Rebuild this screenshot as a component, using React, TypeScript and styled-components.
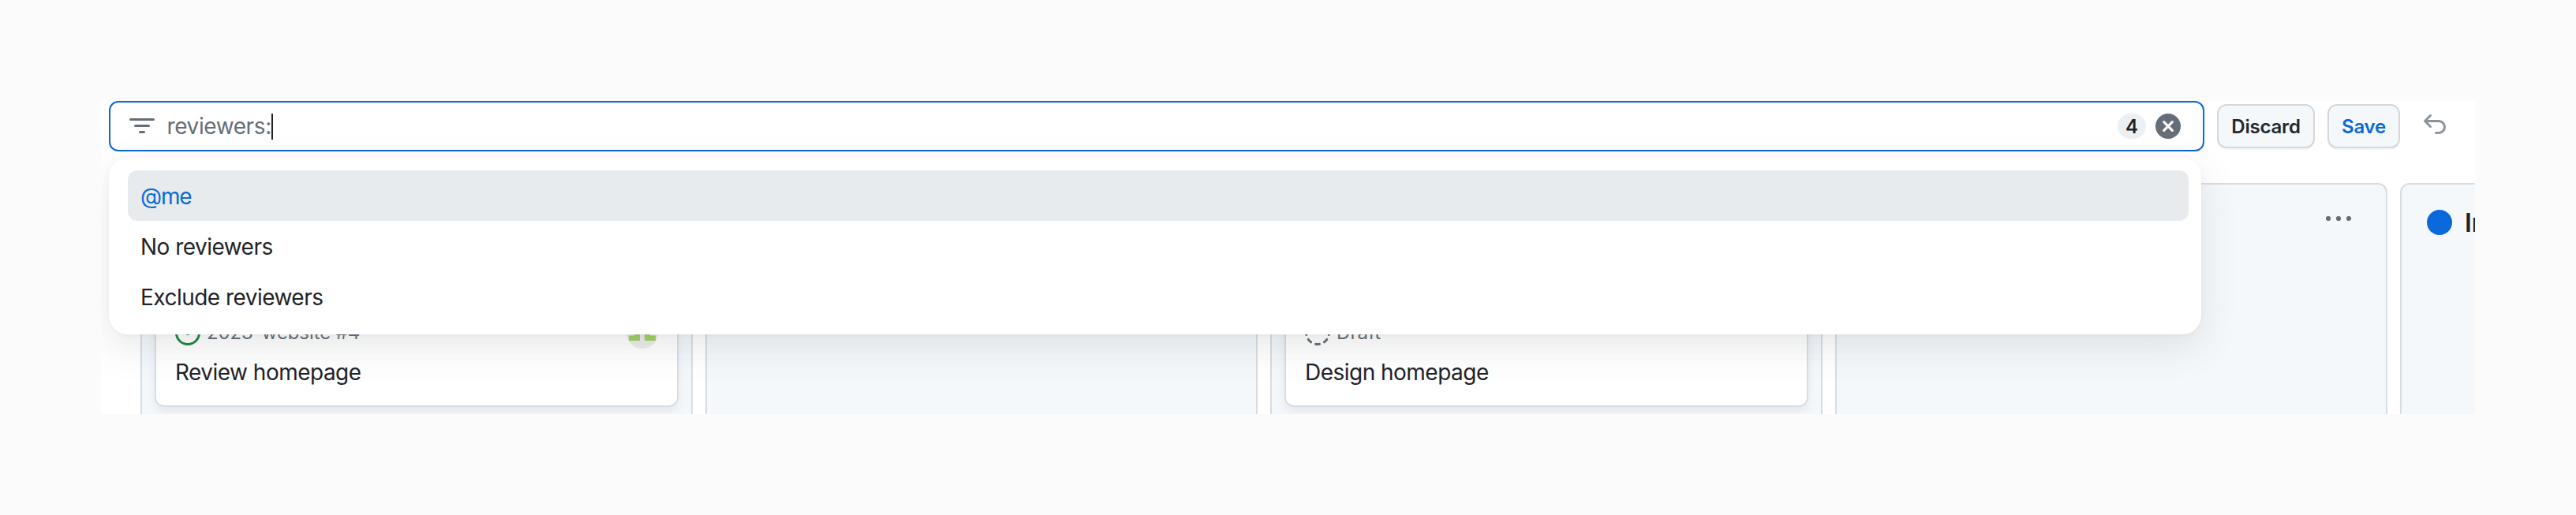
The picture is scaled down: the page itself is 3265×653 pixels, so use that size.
import React from "react";
import styled, { createGlobalStyle } from "styled-components";

const GlobalStyle = createGlobalStyle`
  *, *::before, *::after { box-sizing: border-box; }
  body {
    margin: 0;
    background: #fbfbfb;
    color: #1f2328;
    font-family: Inter, "Liberation Sans", sans-serif;
  }
`;

const Page = styled.div`
  height: 653px;
  padding: 128px 128px 128px;
  overflow: hidden;
`;

const ProjectView = styled.main`
  position: relative;
  height: 397px;
  overflow: hidden;
  background: #fff;
  display: flex;
  flex-direction: column;
`;

const Toolbar = styled.div`
  display: flex;
  align-items: center;
  gap: 16px;
  flex: none;
  height: 64px;
  padding-left: 10px;
`;

const FilterInput = styled.div`
  display: flex;
  align-items: center;
  width: 2656px;
  height: 64px;
  padding: 0 28px 0 24px;
  border: 2px solid #0969da;
  border-radius: 12px;
  background: #fff;
`;

const FilterText = styled.span`
  margin-left: 15.5px;
  color: #656d76;
  font-size: 28px;
  line-height: 40px;
  letter-spacing: -0.4px;
`;

const Caret = styled.span`
  width: 2px;
  height: 33px;
  background: #1f2328;
`;

const Counter = styled.span`
  display: flex;
  align-items: center;
  justify-content: center;
  width: 36px;
  height: 32px;
  margin: 0 12px 0 auto;
  border-radius: 16px;
  background: #ecf0f2;
  font-size: 24px;
  font-weight: 600;
`;

const Button = styled.button<{ $primary?: boolean; $width: number }>`
  width: ${(p) => p.$width}px;
  height: 56px;
  padding: 0;
  border: 2px solid #d4d8dc;
  border-radius: 12px;
  background: #f4f8fb;
  box-shadow: 0 2px 0 rgba(31, 35, 40, 0.04);
  color: ${(p) => (p.$primary ? "#0969da" : "#24292f")};
  font-family: inherit;
  font-size: 24px;
  font-weight: 570;
  letter-spacing: -0.2px;
`;

const UndoButton = styled.span`
  display: flex;
  margin: -4px 0 0 12px;
`;

const Board = styled.div`
  display: flex;
  gap: 16px;
  height: 293px;
  margin-top: 40px;
  padding-left: 50px;
  overflow: hidden;
`;

const Column = styled.section`
  flex: none;
  width: 700px;
  height: 600px;
  padding: 0 16px;
  border: 2px solid #d8dde4;
  border-radius: 12px;
  background: #f4f8fb;
`;

const ColumnHeader = styled.header`
  display: flex;
  align-items: flex-start;
  height: 150px;
  padding: 32px 16px 0;
`;

const ColumnMenu = styled.span`
  display: flex;
  margin: 0 12px 0 auto;
`;

const StatusDot = styled.span`
  flex: none;
  width: 32px;
  height: 32px;
  border-radius: 50%;
  background: #0969da;
`;

const ColumnTitle = styled.h2`
  margin: 1px 0 0 16px;
  font-size: 32px;
  font-weight: 600;
  line-height: 32px;
`;

const Card = styled.article`
  height: 132px;
  padding: 16px 24px 0;
  border: 2px solid #d8dde4;
  border-radius: 12px;
  background: #fff;
  box-shadow: 0 6px 12px rgba(140, 149, 159, 0.15);
`;

const CardMeta = styled.div`
  display: flex;
  align-items: center;
  gap: 8px;
  height: 40px;
  color: #656d76;
  font-size: 24px;
`;

const Repo = styled.span<{ $tracking?: number }>`
  margin-top: -1px;
  letter-spacing: ${(p) => p.$tracking ?? -0.1}px;
`;

const Avatar = styled.span`
  display: flex;
  margin-left: auto;
`;

const CardTitle = styled.h3`
  margin: 10px 0 0;
  font-size: 28px;
  font-weight: 400;
  line-height: 40px;
  letter-spacing: -0.52px;
`;

const Suggestions = styled.ul`
  position: absolute;
  top: 72px;
  left: 10px;
  width: 2652px;
  height: 224px;
  margin: 0;
  padding: 16px 16px 16px 24px;
  list-style: none;
  border-radius: 24px;
  background: #fff;
  box-shadow: 0 2px 6px rgba(31, 35, 40, 0.03), 0 16px 48px rgba(66, 74, 83, 0.13);
`;

const Suggestion = styled.li<{ $active?: boolean }>`
  display: flex;
  align-items: center;
  height: 64px;
  padding: 2px 16px 0;
  border-radius: 12px;
  background: ${(p) => (p.$active ? "#e8ebee" : "transparent")};
  color: ${(p) => (p.$active ? "#0969da" : "#1f2328")};
  font-size: 28px;
  letter-spacing: ${(p) => (p.$active ? -1.1 : -0.53)}px;
`;

const FilterIcon = () => (
  <svg width="32" height="32" viewBox="0 0 16 16" fill="#656d76">
    <path d="M.75 3h14.5a.75.75 0 0 1 0 1.5H.75a.75.75 0 0 1 0-1.5ZM3 7.75A.75.75 0 0 1 3.75 7h8.5a.75.75 0 0 1 0 1.5h-8.5A.75.75 0 0 1 3 7.75Zm3 4a.75.75 0 0 1 .75-.75h2.5a.75.75 0 0 1 0 1.5h-2.5a.75.75 0 0 1-.75-.75Z" />
  </svg>
);

const ClearIcon = () => (
  <svg width="32" height="32" viewBox="0 0 32 32">
    <circle cx="16" cy="16" r="16" fill="#656d76" />
    <path d="M10.7 10.7 21.3 21.3M21.3 10.7 10.7 21.3" stroke="#fff" strokeWidth="3.2" strokeLinecap="round" />
  </svg>
);

const UndoIcon = () => (
  <svg width="32" height="32" viewBox="0 0 16 16" fill="#8c959f">
    <path d="M1.22 6.28a.749.749 0 0 1 0-1.06l3.5-3.5a.749.749 0 1 1 1.06 1.06L3.561 5h7.188l.001.007L10.749 5c.058 0 .116.007.171.019A4.501 4.501 0 0 1 10.5 14H8.796a.75.75 0 0 1 0-1.5H10.5a3 3 0 1 0 0-6H3.561L5.78 8.72a.749.749 0 1 1-1.06 1.06l-3.5-3.5Z" />
  </svg>
);

const KebabIcon = () => (
  <svg width="32" height="22" viewBox="0 0 32 22" fill="#656d76">
    <circle cx="3" cy="11" r="3.1" />
    <circle cx="16" cy="11" r="3.1" />
    <circle cx="29" cy="11" r="3.1" />
  </svg>
);

const OpenIssueIcon = () => (
  <svg width="32" height="32" viewBox="0 0 16 16" fill="#1f883d">
    <path d="M8 9.5a1.5 1.5 0 1 0 0-3 1.5 1.5 0 0 0 0 3Z" />
    <path d="M8 0a8 8 0 1 1 0 16A8 8 0 0 1 8 0ZM1.5 8a6.5 6.5 0 1 0 13 0 6.5 6.5 0 0 0-13 0Z" />
  </svg>
);

const DraftIcon = () => (
  <svg width="32" height="32" viewBox="0 0 32 32" fill="none" stroke="#656d76" strokeWidth="3" strokeLinecap="round">
    {[0, 45, 90, 135, 180, 225, 270, 315].map((angle) => (
      <path key={angle} d="M13.6 30.3Q16 30.7 18.4 30.3" transform={`rotate(${angle} 16 16)`} />
    ))}
  </svg>
);

const AvatarIcon = () => (
  <svg width="40" height="40" viewBox="0 0 40 40">
    <circle cx="20" cy="20" r="20" fill="#ececec" />
    <path d="M3 30V23.5h7V18h7v12ZM23 30V18h7v5.5h7V30Z" fill="#9fd163" />
  </svg>
);

export default function App() {
  return (
    <>
      <GlobalStyle />
      <Page>
        <ProjectView>
          <Toolbar>
            <FilterInput>
              <FilterIcon />
              <FilterText>reviewers:</FilterText>
              <Caret />
              <Counter>4</Counter>
              <ClearIcon />
            </FilterInput>
            <Button $width={124}>Discard</Button>
            <Button $width={92} $primary>Save</Button>
            <UndoButton><UndoIcon /></UndoButton>
          </Toolbar>
          <Board>
            <Column>
              <ColumnHeader />
              <Card>
                <CardMeta>
                  <OpenIssueIcon />
                  <Repo>2023-website #4</Repo>
                  <Avatar><AvatarIcon /></Avatar>
                </CardMeta>
                <CardTitle>Review homepage</CardTitle>
              </Card>
            </Column>
            <Column />
            <Column>
              <ColumnHeader />
              <Card>
                <CardMeta>
                  <DraftIcon />
                  <Repo $tracking={0.1}>Draft</Repo>
                </CardMeta>
                <CardTitle>Design homepage</CardTitle>
              </Card>
            </Column>
            <Column>
              <ColumnHeader>
                <ColumnMenu><KebabIcon /></ColumnMenu>
              </ColumnHeader>
            </Column>
            <Column>
              <ColumnHeader>
                <StatusDot />
                <ColumnTitle>In</ColumnTitle>
              </ColumnHeader>
            </Column>
          </Board>
          <Suggestions>
            <Suggestion $active>@me</Suggestion>
            <Suggestion>No reviewers</Suggestion>
            <Suggestion>Exclude reviewers</Suggestion>
          </Suggestions>
        </ProjectView>
      </Page>
    </>
  );
}
